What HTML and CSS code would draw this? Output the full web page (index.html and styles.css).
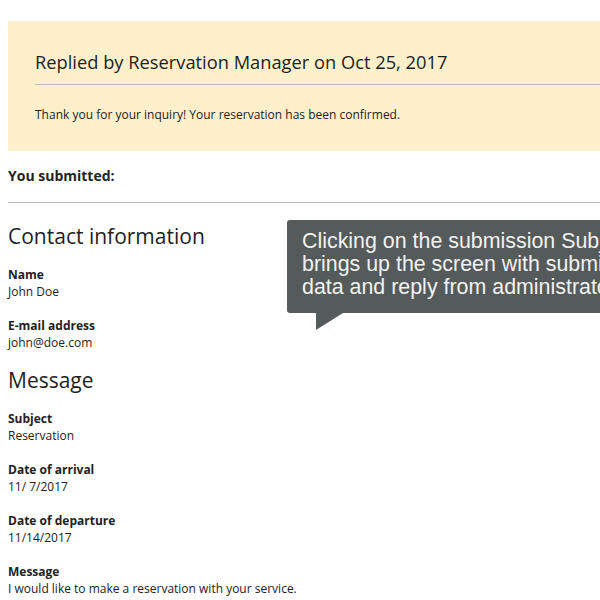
FILE: index.html
```html
<!DOCTYPE html>
<html>
<head>
<meta charset="utf-8">
<link rel="stylesheet" href="styles.css">
</head>
<body>
<div class="page">
  <div class="reply">
    <h1 class="reply-title">Replied by Reservation Manager on Oct 25, 2017</h1>
    <p class="reply-text">Thank you for your inquiry! Your reservation has been confirmed.</p>
  </div>
  <div class="submitted">You submitted:</div>
  <div class="sections">
    <div class="section">
      <h2 class="section-title">Contact information</h2>
      <div class="fields">
        <div class="field"><div class="label">Name</div><div class="value">John Doe</div></div>
        <div class="field"><div class="label">E-mail address</div><div class="value">john@doe.com</div></div>
      </div>
    </div>
    <div class="section">
      <h2 class="section-title">Message</h2>
      <div class="fields">
        <div class="field"><div class="label">Subject</div><div class="value">Reservation</div></div>
        <div class="field"><div class="label">Date of arrival</div><div class="value">11/ 7/2017</div></div>
        <div class="field"><div class="label">Date of departure</div><div class="value">11/14/2017</div></div>
        <div class="field"><div class="label">Message</div><div class="value">I would like to make a reservation with your service.</div></div>
      </div>
    </div>
  </div>
</div>
<div class="tooltip">
  <div class="tooltip-text">Clicking on the submission Subject<br>brings up the screen with submitted<br>data and reply from administrator.</div>
  <div class="tooltip-arrow"></div>
</div>
</body>
</html>
```

FILE: styles.css
```css
html, body {
  margin: 0;
  padding: 0;
  background: #fff;
  overflow: hidden;
}
body {
  font-family: "Open Sans", "DejaVu Sans", sans-serif;
  color: #222;
  width: 600px;
  height: 600px;
  position: relative;
}
.page {
  padding: 21px 0 0 8px;
}
.reply {
  background: #fff0cc;
  padding: 27px 0 28px 27px;
}
.reply-title {
  margin: 0;
  font-size: 18.3px;
  line-height: 28px;
  font-weight: 400;
  color: #1e1e1e;
  padding-bottom: 8px;
  border-bottom: 1px solid #b9b9b9;
  white-space: nowrap;
}
.reply-text {
  margin: 21px 0 0;
  font-size: 12px;
  line-height: 17px;
}
.submitted {
  margin-top: 15px;
  font-size: 14px;
  line-height: 20px;
  font-weight: 700;
  padding-bottom: 16px;
  border-bottom: 1px solid #b9b9b9;
}
.sections {
  display: flex;
  flex-direction: column;
  gap: 13.5px;
  margin-top: 17px;
}
.section {
  display: flex;
  flex-direction: column;
  gap: 13.5px;
}
.section-title {
  margin: 0;
  font-size: 21px;
  line-height: 32px;
  font-weight: 400;
  color: #1e1e1e;
}
.fields {
  display: flex;
  flex-direction: column;
  gap: 17px;
}
.field {
  font-size: 12px;
  line-height: 17px;
}
.label {
  font-weight: 700;
}
.tooltip {
  position: absolute;
  left: 287px;
  top: 220px;
  width: 360px;
  height: 93px;
  background: #555a5a;
  border-radius: 3px;
  box-sizing: border-box;
  padding: 9.5px 0 0 15px;
  overflow: visible;
}
.tooltip-text {
  font-family: "Liberation Sans", Arial, sans-serif;
  font-size: 21.4px;
  line-height: 23px;
  color: #f2f2f2;
  white-space: nowrap;
}
.tooltip-arrow {
  position: absolute;
  left: 29px;
  top: 93px;
  width: 0;
  height: 0;
  border-top: 17px solid #555a5a;
  border-right: 27px solid transparent;
}
```
